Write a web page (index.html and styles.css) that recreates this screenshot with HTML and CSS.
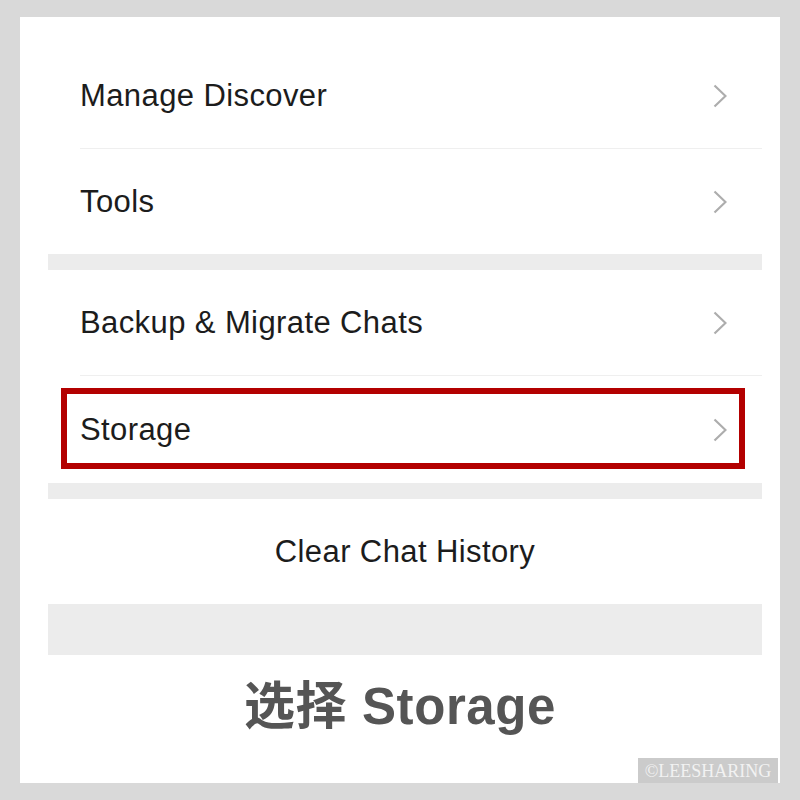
FILE: index.html
```html
<!DOCTYPE html>
<html>
	<head>
		<meta charset="utf-8">
		<title>Storage</title>
		<link rel="stylesheet" href="styles.css">
	</head>
	<body>
		<div class="card">
			<div class="content">
				<!-- 第一组 -->
				<div class="group">
					<div class="row">
						<div class="row-inner">
							<span class="label">Manage Discover</span>
							<svg class="arrow" width="14" height="24" viewBox="0 0 14 24"><polyline points="1.5,1.5 12.5,12 1.5,22.5"/></svg>
						</div>
					</div>
					<div class="row">
						<div class="row-inner">
							<span class="label">Tools</span>
							<svg class="arrow" width="14" height="24" viewBox="0 0 14 24"><polyline points="1.5,1.5 12.5,12 1.5,22.5"/></svg>
						</div>
					</div>
				</div>
				<div class="band"></div>
				<!-- 第二组 -->
				<div class="group">
					<div class="row">
						<div class="row-inner">
							<span class="label">Backup &amp; Migrate Chats</span>
							<svg class="arrow" width="14" height="24" viewBox="0 0 14 24"><polyline points="1.5,1.5 12.5,12 1.5,22.5"/></svg>
						</div>
					</div>
					<div class="row row-mark">
						<div class="row-inner">
							<span class="label">Storage</span>
							<svg class="arrow" width="14" height="24" viewBox="0 0 14 24"><polyline points="1.5,1.5 12.5,12 1.5,22.5"/></svg>
						</div>
						<!-- 红框 -->
						<div class="mark"></div>
					</div>
				</div>
				<div class="band"></div>
				<div class="group">
					<div class="row row-center">
						<span class="label">Clear Chat History</span>
					</div>
				</div>
				<div class="band band-big"></div>
			</div>
			<h2 class="caption">选择 Storage</h2>
			<div class="watermark">©LEESHARING</div>
		</div>
	</body>
</html>
```

FILE: styles.css
```css
* {
	margin: 0;
	padding: 0;
}
body {
	background-color: #d9d9d9;
	padding: 17px 20px;
	font-family: "Liberation Sans", Arial, "Noto Sans CJK SC", sans-serif;
}
.card {
	width: 760px;
	height: 766px;
	background-color: #fff;
	position: relative;
}
.content {
	padding: 26px 18px 0 28px;
}
.row {
	padding-left: 32px;
	position: relative;
}
.row-inner {
	height: 105px;
	display: flex;
	align-items: center;
	justify-content: space-between;
	padding-right: 35px;
	border-bottom: 1px solid #efefef;
}
.row:last-child .row-inner {
	border-bottom: none;
}
.row-mark .row-inner {
	height: 107px;
}
.label {
	font-size: 31px;
	color: #1c1c1c;
	letter-spacing: 0.4px;
}
.arrow polyline {
	fill: none;
	stroke: #adadad;
	stroke-width: 2.2;
}
.row-center {
	padding-left: 0;
	height: 105px;
	display: flex;
	align-items: center;
	justify-content: center;
}
.band {
	height: 16px;
	background-color: #ececec;
}
.band-big {
	height: 51px;
}
.mark {
	position: absolute;
	top: 12px;
	left: 13px;
	right: 17px;
	bottom: 14px;
	border: 6px solid #b30000;
}
.caption {
	text-align: center;
	font-size: 51px;
	font-weight: bold;
	color: #555;
	letter-spacing: 0.6px;
	margin-top: 10px;
}
.watermark {
	position: absolute;
	right: 2px;
	bottom: 0;
	width: 140px;
	height: 25px;
	line-height: 26px;
	background-color: #cbcbcb;
	color: #f2f2f2;
	font-family: "Liberation Serif", "Times New Roman", serif;
	font-size: 18px;
	text-align: center;
}
```
